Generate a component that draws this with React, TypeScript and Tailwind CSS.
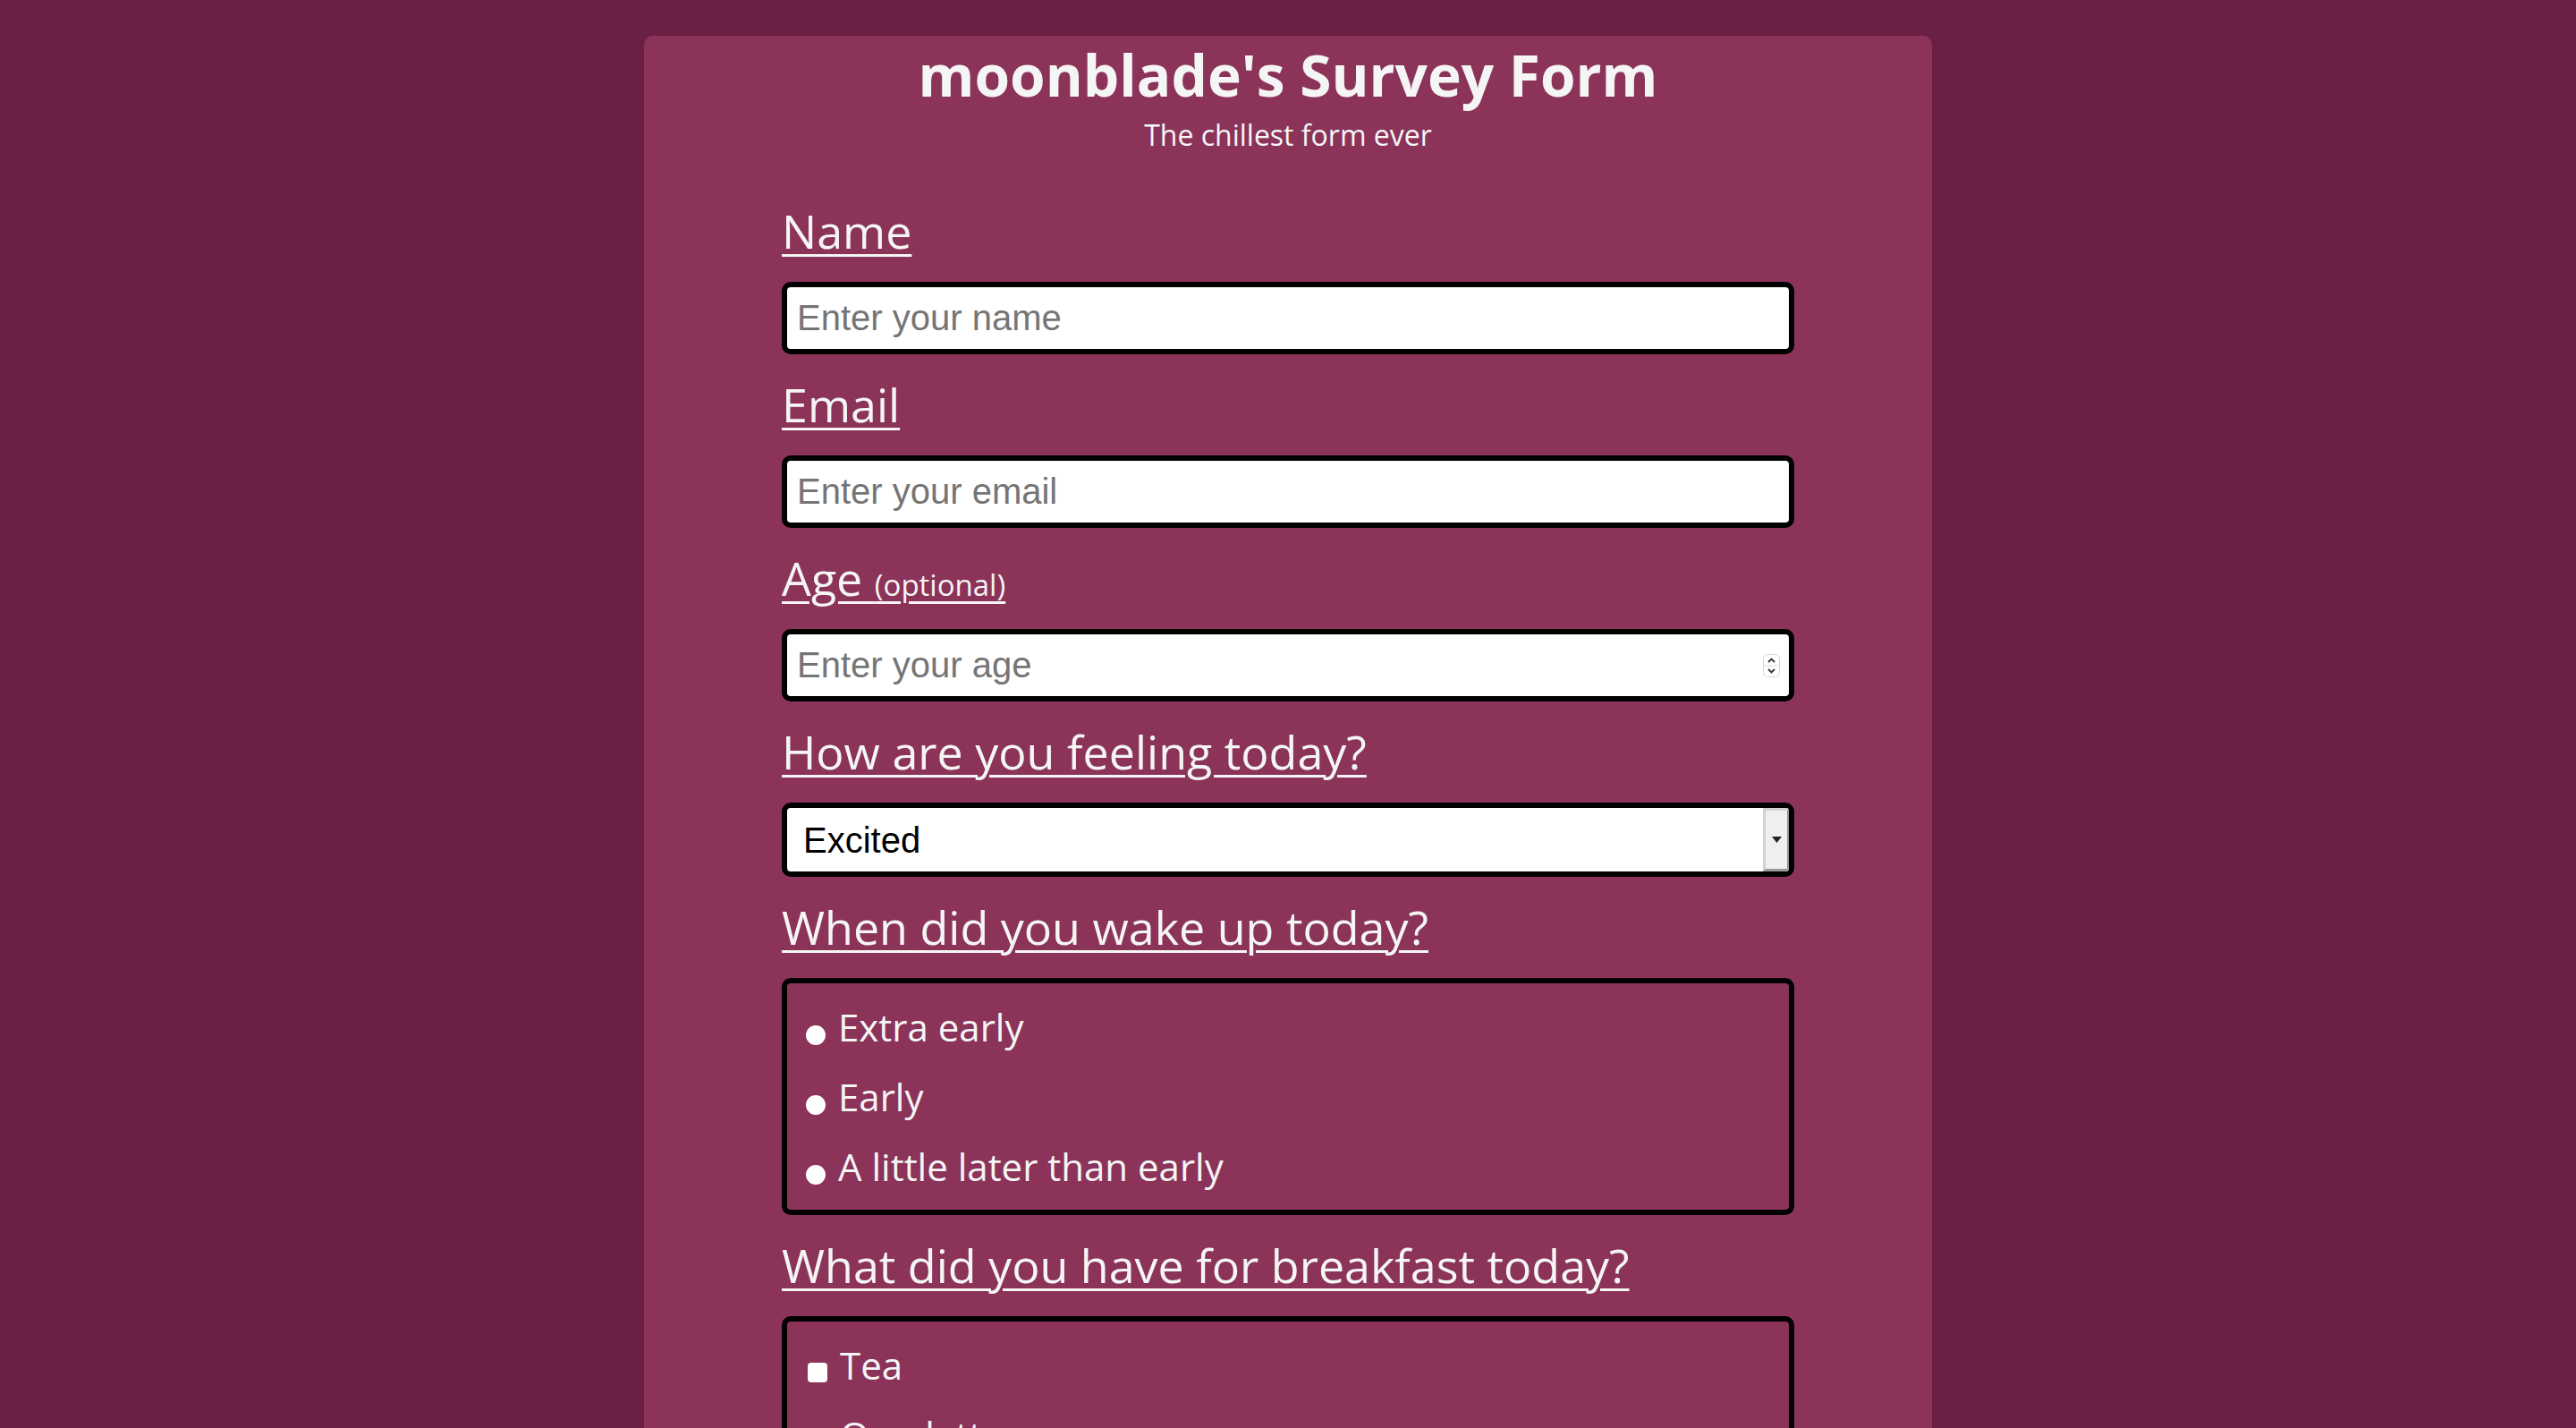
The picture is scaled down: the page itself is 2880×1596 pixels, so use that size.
const labelClass =
  'block text-[52px] leading-[65px] text-[#f5f5f5] underline decoration-[3px] underline-offset-[6px] mb-[25px]';

const inputBox =
  'flex items-center h-[81px] w-full border-[6px] border-black rounded-[10px] bg-white mb-[23px]';

const fieldText =
  "flex-1 min-w-0 h-full bg-transparent outline-none text-[40px] text-black placeholder:text-[#757575] [font-family:'Liberation_Sans',Arial,sans-serif]";

function Spinner() {
  return (
    <svg width="19" height="26" viewBox="0 0 19 26" className="mr-[10px] shrink-0">
      <rect x="0.5" y="0.5" width="18" height="25" rx="5" fill="#fff" stroke="#d6d6d6" />
      <line x1="1" y1="13" x2="18" y2="13" stroke="#dedede" />
      <path d="M6 9 L9.5 5.5 L13 9" fill="none" stroke="#333" strokeWidth="1.8" />
      <path d="M6 17 L9.5 20.5 L13 17" fill="none" stroke="#333" strokeWidth="1.8" />
    </svg>
  );
}

function Radio({ text }: { text: string }) {
  return (
    <label className="block leading-[78px] text-[42px] text-[#f5f5f5]">
      <span className="inline-block w-[22px] h-[22px] rounded-full bg-white align-[-4px] mr-[14px]" />
      {text}
    </label>
  );
}

function Check({ text }: { text: string }) {
  return (
    <label className="block leading-[78px] text-[42px] text-[#f5f5f5]">
      <span className="inline-block w-[22px] h-[22px] rounded-[4px] bg-white align-[-3px] mr-[14px]" />
      {text}
    </label>
  );
}

export default function App() {
  return (
    <div className="min-h-screen bg-[#6b1f45] pt-[40px] flex justify-center [font-family:'Open_Sans',sans-serif]">
      <div className="w-[1440px] bg-[#8b3359] rounded-t-[10px] pb-[80px]">
        <h1 className="text-center text-[64px] leading-[87px] font-bold text-[#f5f5f5]">
          moonblade's Survey Form
        </h1>
        <p className="text-center text-[32px] leading-[44px] mt-[2px] text-[#f5f5f5]">
          The chillest form ever
        </p>

        <form className="w-[1132px] mx-auto mt-[52px]">
          <label className={labelClass}>Name</label>
          <div className={inputBox}>
            <input type="text" placeholder="Enter your name" className={`${fieldText} px-[11px]`} />
          </div>

          <label className={labelClass}>Email</label>
          <div className={inputBox}>
            <input type="email" placeholder="Enter your email" className={`${fieldText} px-[11px]`} />
          </div>

          <label className={labelClass}>
            Age <span className="text-[33px] leading-none">(optional)</span>
          </label>
          <div className={inputBox}>
            <input
              type="text"
              inputMode="numeric"
              placeholder="Enter your age"
              className={`${fieldText} px-[11px]`}
            />
            <Spinner />
          </div>

          <label className={labelClass}>How are you feeling today?</label>
          <div className="flex h-[83px] w-full border-[6px] border-black rounded-[10px] bg-white overflow-hidden mb-[23px]">
            <select defaultValue="excited" className={`${fieldText} appearance-none pl-[18px]`}>
              <option value="excited">Excited</option>
              <option value="chill">Chill</option>
              <option value="tired">Tired</option>
            </select>
            <div className="w-[29px] h-full flex items-center justify-center bg-[#efefef] border-l-[3px] border-t-[3px] border-l-[#d2d2d2] border-t-[#d2d2d2] border-r-[2px] border-b-[3px] border-r-[#9a9a9a] border-b-[#9a9a9a]">
              <svg width="11" height="7" viewBox="0 0 11 7">
                <path d="M0 0 H11 L5.5 7 Z" fill="#222" />
              </svg>
            </div>
          </div>

          <label className={labelClass}>When did you wake up today?</label>
          <div className="border-[6px] border-black rounded-[10px] pl-[21px] pt-[10px] pb-[9px] mb-[23px]">
            <Radio text="Extra early" />
            <Radio text="Early" />
            <Radio text="A little later than early" />
          </div>

          <label className={labelClass}>What did you have for breakfast today?</label>
          <div className="border-[6px] border-black rounded-[10px] pl-[23px] pt-[10px] pb-[9px] mb-[23px]">
            <Check text="Tea" />
            <Check text="Omelette" />
            <Check text="Toast" />
            <Check text="Nothing" />
          </div>

          <label className={labelClass}>Anything else?</label>
          <textarea
            placeholder="Tell us more"
            className="block w-full h-[200px] border-[6px] border-black rounded-[10px] bg-white px-[11px] text-[40px] placeholder:text-[#757575] [font-family:'Liberation_Sans',Arial,sans-serif] mb-[40px]"
          />
          <button
            type="button"
            className="block w-full h-[90px] rounded-[10px] bg-[#6b1f45] text-[40px] text-[#f5f5f5]"
          >
            Submit
          </button>
        </form>
      </div>
    </div>
  );
}
